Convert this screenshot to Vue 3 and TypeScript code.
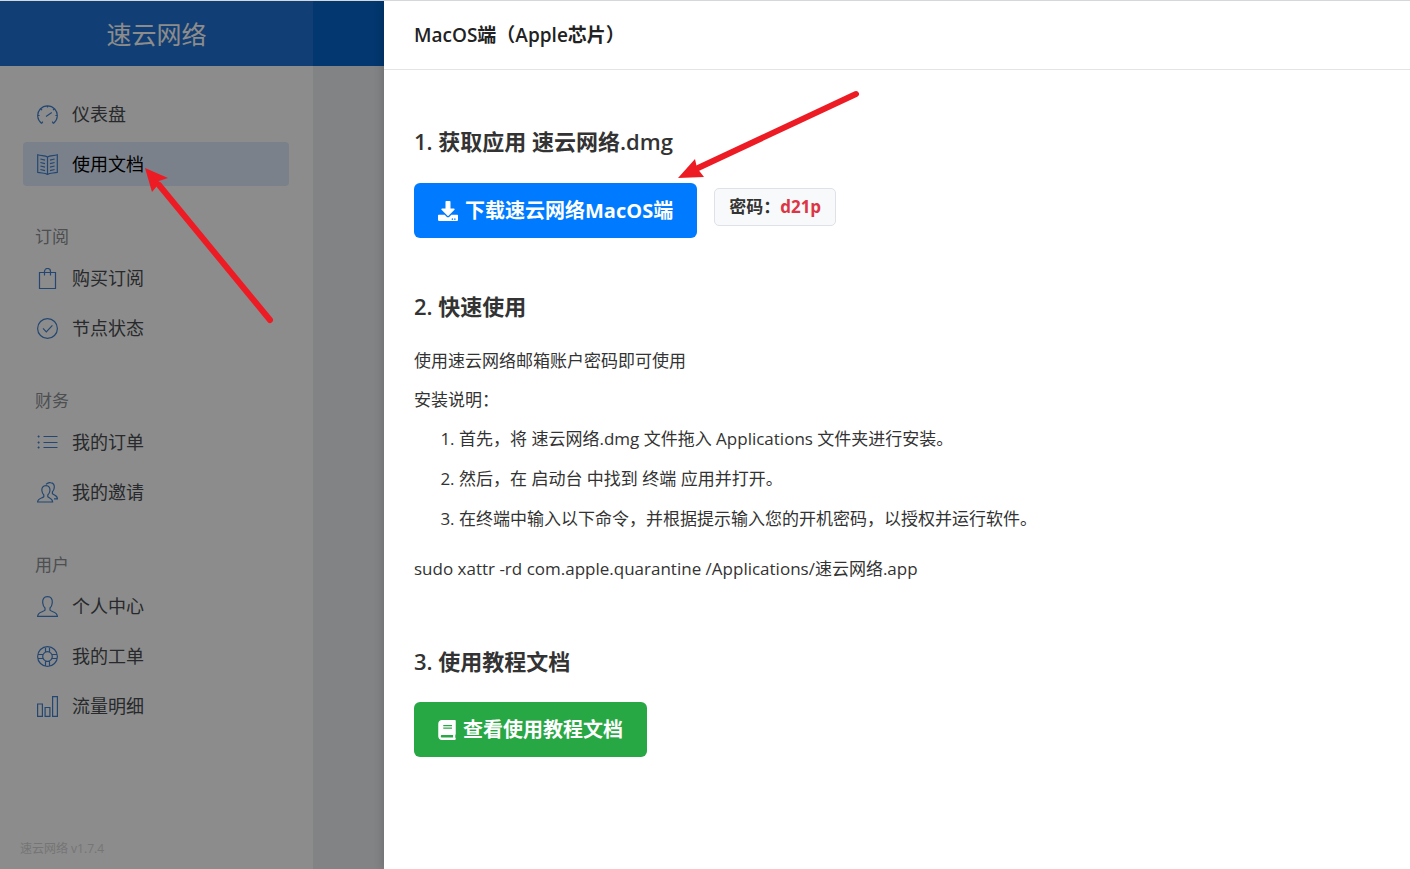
<script setup lang="ts">
interface NavItem {
  label: string
  icon: string
  active?: boolean
}

interface NavGroup {
  heading?: string
  items: NavItem[]
}

const brand = '速云网络'

const groups: NavGroup[] = [
  {
    items: [
      { label: '仪表盘', icon: 'gauge' },
      { label: '使用文档', icon: 'book', active: true },
    ],
  },
  {
    heading: '订阅',
    items: [
      { label: '购买订阅', icon: 'bag' },
      { label: '节点状态', icon: 'check' },
    ],
  },
  {
    heading: '财务',
    items: [
      { label: '我的订单', icon: 'list' },
      { label: '我的邀请', icon: 'people' },
    ],
  },
  {
    heading: '用户',
    items: [
      { label: '个人中心', icon: 'user' },
      { label: '我的工单', icon: 'support' },
      { label: '流量明细', icon: 'chart' },
    ],
  },
]

const icons: Record<string, string> = {
  gauge:
    'M4.6 19.4A9.8 9.8 0 1 1 16.4 19.4M4.6 19.4L5.8 17.6M16.4 19.4L15.2 17.6M9 12.4L14.8 8.6M10.5 1.6v1.8M3.8 5l1.2 1.2M17.2 5l-1.2 1.2M.8 11.5h1.8M20.2 11.5h-1.8',
  book:
    'M10.5 3C8 1.400 4.500 2 .7 .8V18.400C4.500 19.400 8 18.600 10.500 20.400C13 18.600 16.500 19.400 20.300 18.400V.8C16.500 2 13 1.400 10.500 3V20.400M3.400 5l4.600 1.200M3.400 8.500l4.600 1.200M3.400 12l4.600 1.200M3.400 15.500l4.600 1.200M17.600 5l-4.600 1.200M17.600 8.500l-4.600 1.200M17.600 12l-4.600 1.200M17.600 15.500l-4.600 1.200',
  bag: 'M2.5 4.5H18.5V20.5H2.5ZM7.5 7.5V3.5A3 3 0 0 1 13.5 3.5V7.5',
  check: 'M10.5 .6A9.9 9.9 0 1 1 10.5 20.4A9.9 9.9 0 1 1 10.5 .6ZM6 10.4L9.3 13.8L15.4 7.4',
  list: 'M6.5 4.5H20.5M6.5 10.5H20.5M6.5 15.5H20.5M.6 4.5h2M.6 10.5h2M.6 15.5h2M1.6 3.5v2M1.6 9.5v2M1.6 14.5v2',
  people:
    'M9 3.6C5.8 3.6 4.6 6 4.9 8.8C5.1 10.6 5.8 12 6.8 13V14.8C5 16.4 .6 16.2 .6 20H15.6C15.6 16.2 12.6 16.4 10.8 14.8V13C12 12 12.7 10.6 12.9 8.8C13.2 6 12 3.6 9 3.6ZM9 2.4C10.2 .9 11.8 .4 13.6 .6C16.6 .8 17.6 3.2 17.2 6C17 7.6 16.4 8.8 15.4 9.8V11.6C17 13.4 20.4 13 20.4 16.8H17',
  user:
    'M10.5 .6C6.8 .6 5.4 3.2 5.7 6.8C5.9 9 6.7 10.8 8 12V14.2C6 16.2 .6 16 .6 20.4H20.4C20.4 16 15 16.2 13 14.2V12C14.3 10.8 15.1 9 15.3 6.8C15.6 3.2 14.2 .6 10.5 .6Z',
  support:
    'M10.5 .6A9.9 9.9 0 1 1 10.5 20.4A9.9 9.9 0 1 1 10.5 .6ZM10.5 5.7A4.8 4.8 0 1 1 10.5 15.3A4.8 4.8 0 1 1 10.5 5.7ZM8.5 .9V6.2M12.5 .9V6.2M8.5 14.8V20.1M12.5 14.8V20.1M.9 8.5H6.2M.9 12.5H6.2M14.8 8.5H20.1M14.8 12.5H20.1',
  chart: 'M.6 8H5.4V20.4H.6ZM8.1 11.5H12.9V20.4H8.1ZM15.6 .6H20.4V20.4H15.6Z',
}

const steps: string[] = [
  '首先，将 速云网络.dmg 文件拖入 Applications 文件夹进行安装。',
  '然后，在 启动台 中找到 终端 应用并打开。',
  '在终端中输入以下命令，并根据提示输入您的开机密码，以授权并运行软件。',
]
</script>

<template>
  <div class="app">
    <div class="page">
      <aside class="sidebar">
        <div class="brand">{{ brand }}</div>
        <nav class="nav">
          <section v-for="(group, i) in groups" :key="i" class="group">
            <div v-if="group.heading" class="group-heading">{{ group.heading }}</div>
            <ul class="items">
              <li v-for="item in group.items" :key="item.label">
                <a href="#" class="item" :class="{ active: item.active }">
                  <svg class="item-icon" viewBox="0 0 21 21" aria-hidden="true">
                    <path :d="icons[item.icon]" />
                  </svg>
                  <span>{{ item.label }}</span>
                </a>
              </li>
            </ul>
          </section>
        </nav>
        <footer class="version">{{ brand }} v1.7.4</footer>
      </aside>
      <div class="main">
        <div class="topbar"></div>
      </div>
    </div>

    <div class="mask"></div>

    <section class="drawer" role="dialog" aria-labelledby="drawer-title">
      <header class="drawer-header">
        <h1 id="drawer-title">MacOS端（Apple芯片）</h1>
      </header>
      <div class="drawer-body">
        <h2>1. 获取应用 速云网络.dmg</h2>
        <div class="download-row">
          <button type="button" class="btn btn-primary">
            <svg class="btn-icon" viewBox="0 0 512 512" aria-hidden="true">
              <path
                fill-rule="evenodd"
                d="M216 0h80c13.300 0 24 10.700 24 24v168h87.700c17.800 0 26.700 21.500 14.100 34.100L269.700 378.300c-7.500 7.500-19.800 7.500-27.300 0L90.100 226.100c-12.600-12.600-3.700-34.100 14.100-34.100H192V24c0-13.300 10.700-24 24-24zm296 376v112c0 13.300-10.700 24-24 24H24c-13.300 0-24-10.700-24-24V376c0-13.300 10.700-24 24-24h146.700l49 49c20.100 20.100 52.500 20.100 72.600 0l49-49H488c13.300 0 24 10.700 24 24zm-124 88c0-11-9-20-20-20s-20 9-20 20 9 20 20 20 20-9 20-20zm64 0c0-11-9-20-20-20s-20 9-20 20 9 20 20 20 20-9 20-20z"
              />
            </svg>
            <span>下载速云网络MacOS端</span>
          </button>
          <div class="password">密码：<strong>d21p</strong></div>
        </div>

        <h2>2. 快速使用</h2>
        <p>使用速云网络邮箱账户密码即可使用</p>
        <p>安装说明：</p>
        <ol class="steps">
          <li v-for="step in steps" :key="step">{{ step }}</li>
        </ol>
        <p class="command">sudo xattr -rd com.apple.quarantine /Applications/速云网络.app</p>

        <h2>3. 使用教程文档</h2>
        <button type="button" class="btn btn-success">
          <svg class="btn-icon book" viewBox="0 0 448 512" aria-hidden="true">
            <path
              fill-rule="evenodd"
              d="M448 360V24c0-13.300-10.700-24-24-24H96C43 0 0 43 0 96v320c0 53 43 96 96 96h328c13.300 0 24-10.700 24-24v-16c0-7.500-3.500-14.300-8.900-18.700-4.200-15.400-4.200-59.300 0-74.700 5.400-4.300 8.900-11.100 8.900-18.600zM128 134c0-3.300 2.700-6 6-6h212c3.300 0 6 2.700 6 6v20c0 3.300-2.700 6-6 6H134c-3.300 0-6-2.700-6-6v-20zm0 64c0-3.300 2.700-6 6-6h212c3.300 0 6 2.700 6 6v20c0 3.300-2.700 6-6 6H134c-3.300 0-6-2.700-6-6v-20zm253.400 250H96c-17.700 0-32-14.300-32-32 0-17.600 14.400-32 32-32h285.400c-1.900 17.100-1.900 46.900 0 64z"
            />
          </svg>
          <span>查看使用教程文档</span>
        </button>
      </div>
    </section>

    <svg class="arrow arrow-menu" viewBox="0 0 130 156" aria-hidden="true">
      <path class="shaft" d="M14 17L125 152" />
      <path class="head" d="M0 0L23 10L14 13L12 18L7 24Z" />
    </svg>
    <svg class="arrow arrow-download" viewBox="0 0 182 90" aria-hidden="true">
      <path class="shaft" d="M20 78L178 4" />
      <path class="head" d="M0 88L17 69L19 78L26 87Z" />
    </svg>
  </div>
</template>

<style>
body {
  margin: 0;
}
</style>

<style scoped>
.app {
  position: relative;
  box-sizing: border-box;
  min-height: 100vh;
  display: flex;
  overflow: hidden;
  border-top: 1px solid #d4d7dc;
  font-family: 'Open Sans', 'Noto Sans CJK SC', sans-serif;
  font-size: 17px;
  line-height: 28px;
  color: #333;
}

.page {
  flex: 1;
  display: flex;
}

.sidebar {
  flex: none;
  width: 313px;
  display: flex;
  flex-direction: column;
  background: #fff;
}

.brand {
  height: 65px;
  line-height: 66px;
  text-align: center;
  font-size: 25px;
  color: #fff;
  background: #1f72d3;
}

.nav {
  flex: 1;
  padding: 26px 24px 24px 23px;
}

.group-heading {
  padding: 39px 12px 7px;
  font-size: 17px;
  line-height: 24px;
  color: #8c9094;
}

.items {
  margin: 0;
  padding: 0;
  list-style: none;
  display: flex;
  flex-direction: column;
  gap: 6px;
}

.item {
  height: 44px;
  padding: 0 14px;
  display: flex;
  align-items: center;
  gap: 14px;
  border-radius: 4px;
  font-size: 18px;
  color: #484c50;
  text-decoration: none;
}

.item.active {
  background: #dfebfb;
  color: #000;
}

.item-icon {
  width: 21px;
  height: 21px;
  fill: none;
  stroke: #4182cf;
  stroke-width: 1.2;
}

.version {
  padding: 0 20px 10px;
  font-size: 12px;
  line-height: 20px;
  color: #d6d6d6;
}

.main {
  flex: 1;
  background: #ebeff2;
}

.topbar {
  height: 65px;
  background: #0464cb;
}

.mask {
  position: absolute;
  inset: 0;
  background: rgba(0, 0, 0, 0.45);
}

.drawer {
  position: absolute;
  top: 0;
  right: 0;
  bottom: 0;
  left: 384px;
  background: #fff;
  box-shadow: -2px 0 8px rgba(0, 0, 0, 0.15);
}

.drawer-header {
  padding: 20px 30px;
  border-bottom: 1px solid #e4e4e4;
}

h1 {
  margin: 0;
  font-size: 19px;
  line-height: 28px;
  font-weight: 600;
  color: #222;
}

.drawer-body {
  padding: 55px 30px;
}

h2 {
  margin: 0 0 25px;
  font-size: 22px;
  line-height: 32px;
  font-weight: 600;
}

.download-row {
  display: flex;
  align-items: flex-start;
  gap: 17px;
  padding-top: 1px;
  margin-bottom: 52px;
}

.btn {
  height: 55px;
  padding: 0 24px;
  display: flex;
  align-items: center;
  gap: 7px;
  border: 0;
  border-radius: 6px;
  font-family: inherit;
  font-size: 20px;
  font-weight: 700;
  line-height: 28px;
  color: #fff;
}

.btn-primary {
  background: #007bff;
}

.btn-success {
  background: #28a745;
}

.btn-icon {
  width: 20px;
  height: 20px;
  fill: #fff;
}

.btn-icon.book {
  width: 18px;
}

.password {
  margin-top: 5px;
  padding: 4px 14px;
  border: 1px solid #dee2e6;
  border-radius: 5px;
  background: #f8f9fa;
  font-weight: 600;
}

.password strong {
  font-weight: 700;
  color: #dc3545;
}

p {
  margin: 0 0 11px;
}

.steps {
  margin: 0 0 22px;
  padding-left: 45px;
  display: flex;
  flex-direction: column;
  gap: 12px;
}

.command {
  margin-bottom: 62px;
}

.arrow {
  position: absolute;
  overflow: visible;
  pointer-events: none;
}

.arrow-menu {
  left: 145px;
  top: 167px;
  width: 130px;
  height: 156px;
}

.arrow-download {
  left: 678px;
  top: 89px;
  width: 182px;
  height: 90px;
}

.shaft {
  fill: none;
  stroke: #ed1c24;
  stroke-width: 6;
  stroke-linecap: round;
}

.head {
  fill: #ed1c24;
}
</style>
